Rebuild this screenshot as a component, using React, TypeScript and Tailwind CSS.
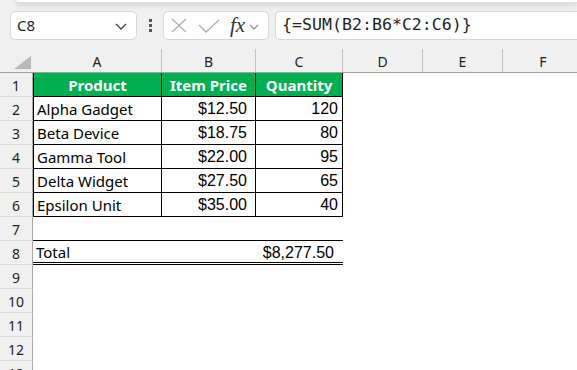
import React from "react";

const font = { fontFamily: '"Noto Sans", sans-serif' };

function RowHead({ n }: { n: number }) {
  return (
    <div className="w-[33px] shrink-0 h-full flex items-center justify-center pt-[2px] bg-[#f0f0f0] border-r border-b border-r-[#a8a8a8] border-b-[#d9d9d9] text-[14px] text-[#1f1f1f]">
      {n}
    </div>
  );
}

function Row({ n, children }: { n: number; children?: React.ReactNode }) {
  return (
    <div className="flex h-[24px] shrink-0">
      <RowHead n={n} />
      {children}
    </div>
  );
}

function EmptyCols() {
  return (
    <>
      <div className="w-[80px] shrink-0" />
      <div className="w-[80px] shrink-0" />
      <div className="w-[80px] shrink-0" />
    </>
  );
}

const money = { fontFamily: '"Liberation Sans", Arial, sans-serif' };

function DataRow({ n, name, price, qty }: { n: number; name: string; price: string; qty: string }) {
  return (
    <Row n={n}>
      <div className="w-[129px] shrink-0 flex items-center pt-[2px] pl-[3px] border-l border-r border-b border-black text-[15px] text-black">
        {name}
      </div>
      <div className="w-[94px] shrink-0 flex items-center justify-end pt-[1px] pr-[8px] border-r border-b border-black text-[16px] text-black" style={money}>
        {price}
      </div>
      <div className="w-[87px] shrink-0 flex items-center justify-end pt-[1px] pr-[4px] border-r border-b border-black text-[16px] text-black" style={money}>
        {qty}
      </div>
      <div className="w-[80px] shrink-0" />
      <EmptyCols />
    </Row>
  );
}

function ColHead({ w, label, last }: { w: string; label: string; last?: boolean }) {
  return (
    <div className={w + " shrink-0 h-full flex items-center justify-center pt-[1px] text-[14px] text-[#1f1f1f] " + (last ? "" : "border-r border-r-[#c4c4c4]")}>
      {label}
    </div>
  );
}

export default function App() {
  return (
    <div className="w-[577px] h-[370px] overflow-hidden bg-[#f0f0f0] flex flex-col" style={font}>
      {/* ribbon bottom */}
      <div className="h-[3px] ml-[15px] bg-white rounded-bl-[6px] border-l border-b border-[#dcdcdc] shadow-[0_2px_5px_rgba(0,0,0,0.15)] shrink-0" />
      {/* formula bar */}
      <div className="flex items-center mt-[8px] h-[29px] shrink-0">
        <div className="ml-[10px] w-[127px] h-full bg-white border border-[#d6d6d6] rounded-[5px] flex items-center pl-[6px] pr-[9px]">
          <span className="text-[15px] text-[#1f1f1f] flex-1">C8</span>
          <svg width="12" height="7" viewBox="0 0 12 7" className="mt-[2px]">
            <path d="M1 1 L6 6 L11 1" fill="none" stroke="#444" strokeWidth="1.3" />
          </svg>
        </div>
        <div className="w-[26px] h-full flex flex-col items-center justify-center gap-[2px]">
          <div className="w-[3px] h-[3px] bg-[#555]" />
          <div className="w-[3px] h-[3px] bg-[#555]" />
          <div className="w-[3px] h-[3px] bg-[#555]" />
        </div>
        <div className="w-[106px] h-full bg-white border border-[#d6d6d6] rounded-[5px] flex items-center pl-[7px]">
          <svg width="16" height="15" viewBox="0 0 16 15">
            <path d="M1 1 L15 14 M15 1 L1 14" fill="none" stroke="#b0b0b0" strokeWidth="1.3" />
          </svg>
          <svg width="22" height="14" viewBox="0 0 22 14" className="ml-[11px]">
            <path d="M1 6 L8 13 L21 1" fill="none" stroke="#b0b0b0" strokeWidth="1.3" />
          </svg>
          <span className="ml-[10px] text-[21px] italic text-[#333] leading-none" style={{ fontFamily: '"Liberation Serif", serif' }}>
            fx
          </span>
          <svg width="10" height="6" viewBox="0 0 10 6" className="ml-[4px] mt-[2px]">
            <path d="M1 1 L5 5 L9 1" fill="none" stroke="#888" strokeWidth="1.1" />
          </svg>
        </div>
        <div className="ml-[6px] flex-1 h-full bg-white border border-r-0 border-[#d6d6d6] rounded-l-[5px] flex items-center pl-[6px]">
          <span className="text-[16.6px] text-[#1f1f1f]" style={{ fontFamily: '"DejaVu Sans Mono", monospace' }}>
            {"{=SUM(B2:B6*C2:C6)}"}
          </span>
        </div>
      </div>
      {/* column headers */}
      <div className="mt-[9px] h-[24px] flex shrink-0 border-b border-[#a0a0a0]">
        <div className="w-[33px] shrink-0 h-full relative">
          <svg width="17" height="13" viewBox="0 0 17 13" className="absolute right-[2px] bottom-[3px]">
            <path d="M17 0 L17 13 L0 13 Z" fill="#b9b9b9" />
          </svg>
        </div>
        <ColHead w="w-[129px]" label="A" />
        <ColHead w="w-[94px]" label="B" />
        <ColHead w="w-[87px]" label="C" />
        <ColHead w="w-[80px]" label="D" />
        <ColHead w="w-[80px]" label="E" />
        <ColHead w="w-[80px]" label="F" last />
      </div>
      {/* body */}
      <div className="flex-1 bg-white flex flex-col">
        <Row n={1}>
          <div className="w-[129px] shrink-0 flex items-center justify-center pt-[2px] bg-[#00b050] border-l border-r border-b border-black text-[15px] font-bold text-white">
            Product
          </div>
          <div className="w-[94px] shrink-0 flex items-center justify-center pt-[2px] bg-[#00b050] border-r border-b border-black text-[15px] font-bold text-white">
            Item Price
          </div>
          <div className="w-[87px] shrink-0 flex items-center justify-center pt-[2px] bg-[#00b050] border-r border-b border-black text-[15px] font-bold text-white">
            Quantity
          </div>
          <div className="w-[80px] shrink-0" />
          <EmptyCols />
        </Row>
        <DataRow n={2} name="Alpha Gadget" price="$12.50" qty="120" />
        <DataRow n={3} name="Beta Device" price="$18.75" qty="80" />
        <DataRow n={4} name="Gamma Tool" price="$22.00" qty="95" />
        <DataRow n={5} name="Delta Widget" price="$27.50" qty="65" />
        <DataRow n={6} name="Epsilon Unit" price="$35.00" qty="40" />
        <Row n={7}>
          <div className="w-[310px] shrink-0 border-b border-black" />
        </Row>
        <Row n={8}>
          <div className="w-[310px] shrink-0 flex items-center justify-between pt-[2px] border-b-[3px] border-double border-black">
            <span className="pl-[3px] text-[15px] text-black">Total</span>
            <span className="pr-[9px] text-[16px] text-black" style={money}>$8,277.50</span>
          </div>
        </Row>
        <Row n={9} />
        <Row n={10} />
        <Row n={11} />
        <Row n={12} />
        <Row n={13} />
      </div>
    </div>
  );
}
